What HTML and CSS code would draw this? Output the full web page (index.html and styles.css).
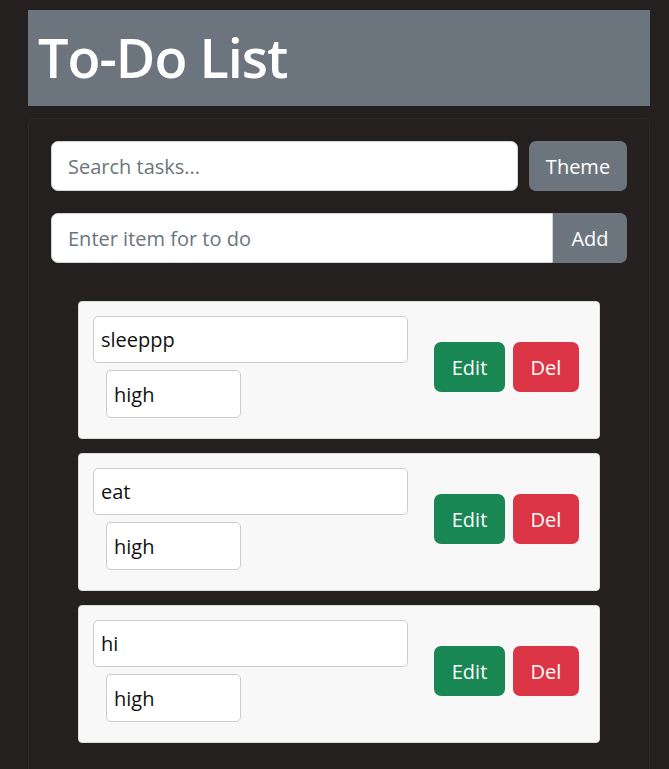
FILE: index.html
```html
<!DOCTYPE html>
<html lang="en">
<head>
<meta charset="utf-8">
<title>To-Do List</title>
<link rel="stylesheet" href="styles.css">
</head>
<body>
<header class="banner"><h1 class="title">To-Do List</h1></header>
<main class="panel">
  <div class="row">
    <input class="field search" type="text" placeholder="Search tasks...">
    <button class="btn btn-gray theme">Theme</button>
  </div>
  <div class="row group">
    <input class="field add-field" type="text" placeholder="Enter item for to do">
    <button class="btn btn-gray add">Add</button>
  </div>
  <ul class="list">
    <li class="item">
      <div class="fields">
        <input class="small-field name" type="text" value="sleeppp">
        <input class="small-field prio" type="text" value="high">
      </div>
      <div class="actions">
        <button class="btn btn-green">Edit</button>
        <button class="btn btn-red">Del</button>
      </div>
    </li>
    <li class="item">
      <div class="fields">
        <input class="small-field name" type="text" value="eat">
        <input class="small-field prio" type="text" value="high">
      </div>
      <div class="actions">
        <button class="btn btn-green">Edit</button>
        <button class="btn btn-red">Del</button>
      </div>
    </li>
    <li class="item">
      <div class="fields">
        <input class="small-field name" type="text" value="hi">
        <input class="small-field prio" type="text" value="high">
      </div>
      <div class="actions">
        <button class="btn btn-green">Edit</button>
        <button class="btn btn-red">Del</button>
      </div>
    </li>
  </ul>
</main>
</body>
</html>
```
FILE: styles.css
```css
* { box-sizing: border-box; }
html, body { margin: 0; }
body {
  background: #242020;
  font-family: "Open Sans", "Noto Sans", sans-serif;
  padding: 10px 19px 0 28px;
  overflow: hidden;
}
.banner {
  background: #6c757d;
  height: 96px;
  display: flex;
  align-items: center;
  padding: 0 10px;
}
.title {
  margin: 0;
  color: #fff;
  font-size: 54px;
  font-weight: 600;
  letter-spacing: -1px;
  line-height: 1;
  padding-bottom: 2px;
}
.panel {
  margin-top: 12px;
  border: 1px solid #2e2a2a;
  border-radius: 6px;
  padding: 22px 22px 40px 22px;
  min-height: 700px;
}
.row { display: flex; gap: 11px; }
.row.group { gap: 0; margin-top: 22px; }
.field {
  flex: 1;
  height: 50px;
  border: 1px solid #ced4da;
  border-radius: 7px;
  background: #fff;
  font: inherit;
  font-size: 20px;
  padding: 0 16px;
  color: #212529;
}
.field::placeholder { color: #6c757d; }
.add-field { border-radius: 7px 0 0 7px; }
.btn {
  font: inherit;
  font-size: 20px;
  color: #fff;
  border: none;
  border-radius: 7px;
  cursor: pointer;
}
.btn-gray { background: #6c757d; }
.theme { width: 98px; height: 50px; }
.add { width: 74px; height: 50px; border-radius: 0 7px 7px 0; }
.list {
  list-style: none;
  margin: 38px 27px 0;
  padding: 0;
  display: flex;
  flex-direction: column;
  gap: 14px;
}
.item {
  background: #f8f8f8;
  border: 1px solid #dcdcdc;
  border-radius: 4px;
  height: 138px;
  padding: 14px 20px 0 14px;
  display: flex;
  justify-content: space-between;
}
.fields { display: flex; flex-direction: column; }
.small-field {
  border: 1px solid #ccc;
  border-radius: 5px;
  background: #fff;
  font: inherit;
  font-size: 20px;
  color: #111;
  padding: 0 7px;
}
.name { width: 315px; height: 47px; }
.prio { width: 135px; height: 48px; margin: 7px 0 0 13px; padding-left: 7px; }
.actions { display: flex; gap: 8px; align-items: flex-start; padding-top: 26px; }
.btn-green { background: #198754; width: 71px; height: 50px; }
.btn-red { background: #dc3545; width: 66px; height: 50px; }
```
